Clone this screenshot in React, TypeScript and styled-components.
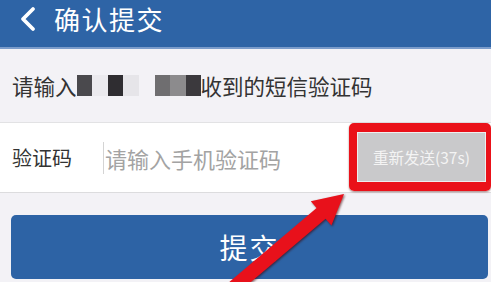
import React from 'react';
import styled, { createGlobalStyle } from 'styled-components';

const GlobalStyle = createGlobalStyle`
  html, body {
    margin: 0;
    padding: 0;
    background: #f3f2f6;
  }
  body {
    width: 491px;
    height: 282px;
    overflow: hidden;
    font-family: "Noto Sans CJK SC", "Liberation Sans", sans-serif;
  }
`;

const maskBlocks = [
  { w: 15, c: '#4a494d' },
  { w: 16, c: '#ebeaee' },
  { w: 15, c: '#2f2d31' },
  { w: 16, c: '#e6e5e9' },
  { w: 16, c: 'transparent' },
  { w: 15, c: '#6f6e70' },
  { w: 16, c: '#8c8b8d' },
  { w: 15, c: '#3b393d' },
];

export default function App() {
  return (
    <>
      <GlobalStyle />
      <Page>
        <Header>
          <BackIcon width="18" height="26" viewBox="0 0 18 26">
            <polyline points="14,3 4,13 14,23" />
          </BackIcon>
          <Title>确认提交</Title>
        </Header>

        <Hint>
          请输入
          <Mask>
            {maskBlocks.map((b, i) => (
              <MaskBlock key={i} $w={b.w} $c={b.c} />
            ))}
          </Mask>
          收到的短信验证码
        </Hint>

        <CodeRow>
          <Label>验证码</Label>
          <InputWrap>
            <CodeInput placeholder="请输入手机验证码" />
          </InputWrap>
          <Highlight>
            <ResendButton>重新发送(37s)</ResendButton>
          </Highlight>
        </CodeRow>

        <SubmitArea>
          <SubmitButton>提交</SubmitButton>
        </SubmitArea>

        <Arrow width="491" height="282" viewBox="0 0 491 282">
          <polygon points="344,194 331.4,225.6 325.6,218.7 224.5,304.3 215.5,293.7 316.6,208.1 310.8,201.2" />
        </Arrow>
      </Page>
    </>
  );
}

const Page = styled.div`
  position: relative;
  width: 491px;
  height: 282px;
  overflow: hidden;
  display: flex;
  flex-direction: column;
`;

const Header = styled.div`
  height: 49px;
  box-sizing: border-box;
  background: #2e64a6;
  border-bottom: 2px solid #7b9ccb;
  display: flex;
  align-items: center;
  padding: 0 0 9px 19px;
  gap: 17px;
  color: #fff;
`;

const BackIcon = styled.svg`
  fill: none;
  stroke: #fff;
  stroke-width: 3.8;
  stroke-linecap: round;
  stroke-linejoin: round;
`;

const Title = styled.div`
  font-size: 26px;
  letter-spacing: 1.5px;
  line-height: 1;
`;

const Hint = styled.div`
  height: 73px;
  display: flex;
  align-items: center;
  padding-left: 12px;
  font-size: 21.5px;
  color: #333;
`;

const Mask = styled.span`
  display: flex;
  height: 21px;
`;

const MaskBlock = styled.span<{ $w: number; $c: string }>`
  width: ${(p) => p.$w}px;
  height: 100%;
  background: ${(p) => p.$c};
`;

const CodeRow = styled.div`
  height: 71px;
  box-sizing: border-box;
  background: #fff;
  border-top: 1px solid #e2e2e4;
  border-bottom: 1px solid #dcdcde;
  display: flex;
  align-items: center;
  padding-left: 12px;
`;

const Label = styled.div`
  width: 91px;
  font-size: 20px;
  color: #333;
`;

const InputWrap = styled.div`
  flex: 1;
  height: 32px;
  border-left: 1px solid #d4d4d4;
  display: flex;
  align-items: center;
`;

const CodeInput = styled.input`
  width: 100%;
  border: none;
  outline: none;
  background: transparent;
  padding: 0 0 0 1px;
  font-family: "Noto Sans CJK SC", sans-serif;
  font-size: 22px;
  color: #333;
  &::placeholder {
    color: #a3a3a3;
  }
`;

const Highlight = styled.div`
  align-self: flex-start;
  border: solid #ea1119;
  border-width: 9px 5px 9px 8px;
  border-radius: 5px;
  box-shadow: 0 1px 2px rgba(80, 0, 0, 0.5);
`;

const ResendButton = styled.div`
  width: 129px;
  height: 50px;
  background: #c9c9cb;
  color: #f4f4f4;
  font-family: "Noto Sans CJK SC", "Liberation Serif", serif;
  font-size: 15.5px;
  display: flex;
  align-items: center;
  justify-content: center;
  border: 1px solid #eee;
  box-sizing: border-box;
`;

const SubmitArea = styled.div`
  padding: 22px 3px 0 11px;
`;

const SubmitButton = styled.div`
  height: 64px;
  border-radius: 5px;
  background: #2d63a5;
  color: #fff;
  font-size: 28px;
  letter-spacing: 2px;
  display: flex;
  align-items: center;
  justify-content: center;
`;

const Arrow = styled.svg`
  position: absolute;
  left: 0;
  top: 0;
  pointer-events: none;
  fill: #e8111b;
  filter: drop-shadow(1px 1px 1px rgba(60, 0, 0, 0.6));
`;
